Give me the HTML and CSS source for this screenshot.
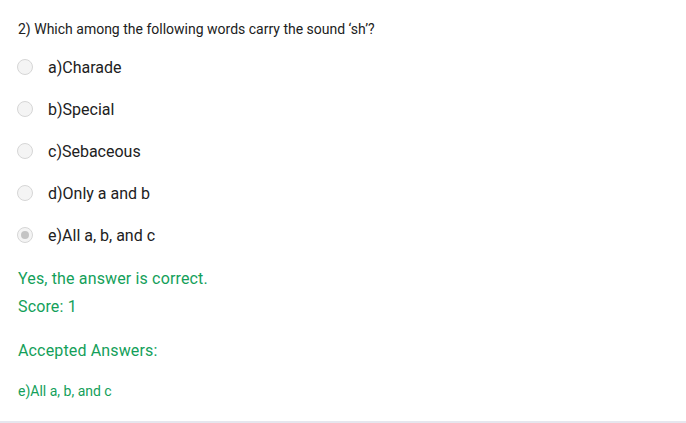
FILE: index.html
```html
<!DOCTYPE html>
<html>
<head>
<meta charset="utf-8">
<link rel="stylesheet" href="styles.css">
</head>
<body>
<div class="card">
  <div class="question">2) Which among the following words carry the sound ‘sh’?</div>
  <div class="options">
    <div class="option"><span class="radio"></span><span class="label">a)Charade</span></div>
    <div class="option"><span class="radio"></span><span class="label">b)Special</span></div>
    <div class="option"><span class="radio"></span><span class="label">c)Sebaceous</span></div>
    <div class="option"><span class="radio"></span><span class="label">d)Only a and b</span></div>
    <div class="option"><span class="radio checked"></span><span class="label">e)All a, b, and c</span></div>
  </div>
  <div class="result">Yes, the answer is correct.</div>
  <div class="score">Score: 1</div>
  <div class="accepted">Accepted Answers:</div>
  <div class="answer">e)All a, b, and c</div>
</div>
</body>
</html>
```
FILE: styles.css
```css
html, body { margin: 0; padding: 0; background: #fff; }
body { font-family: Roboto, "Liberation Sans", sans-serif; color: #212121; }
.card {
  height: 421px;
  border-bottom: 2px solid #e6e6ee;
  padding: 0 0 0 18px;
  box-sizing: content-box;
}
.question {
  font-size: 14px;
  line-height: 16px;
  padding-top: 21px;
}
.options { display: flex; flex-direction: column; margin-top: 9px; }
.option { display: flex; align-items: center; height: 42px; }
.radio {
  width: 16px; height: 16px;
  border: 1px solid #d6d6d6;
  border-radius: 50%;
  background: #f4f4f4;
  box-sizing: border-box;
  position: relative;
  margin-left: -1px;
}
.radio.checked::after {
  content: "";
  position: absolute;
  left: 3px; top: 3px;
  width: 8px; height: 8px;
  border-radius: 50%;
  background: #c4c4c4;
}
.label { font-size: 16px; margin-left: 15px; }
.result, .score, .accepted, .answer { color: #14a05a; }
.result, .score, .accepted { letter-spacing: 0.15px; }
.result { font-size: 16px; line-height: 20px; margin-top: 13px; }
.score { font-size: 16px; line-height: 20px; margin-top: 8px; }
.accepted { font-size: 16px; line-height: 20px; margin-top: 24px; }
.answer { font-size: 14px; line-height: 16px; margin-top: 22px; }
```
